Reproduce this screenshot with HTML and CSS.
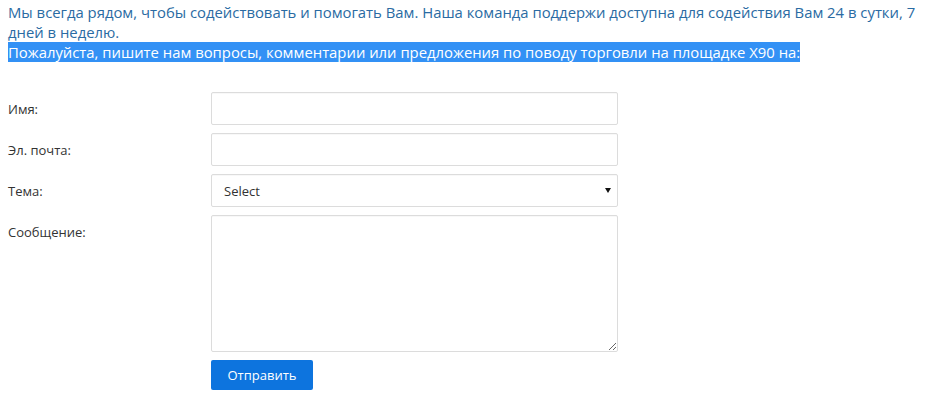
FILE: index.html
```html
<!DOCTYPE html>
<html lang="ru">
<head>
<meta charset="utf-8">
<title>Контакты</title>
<link rel="stylesheet" href="styles.css">
</head>
<body>
<div class="page">
  <p class="intro">Мы всегда рядом, чтобы содействовать и помогать Вам. Наша команда поддержи доступна для содействия Вам 24 в сутки, 7 дней в неделю.<br><span class="hl">Пожалуйста, пишите нам вопросы, комментарии или предложения по поводу торговли на площадке X90 на:</span></p>
  <form class="form">
    <label class="label" for="name">Имя:</label>
    <input class="field" id="name" type="text">
    <label class="label" for="email">Эл. почта:</label>
    <input class="field" id="email" type="text">
    <label class="label" for="topic">Тема:</label>
    <div class="select-wrap">
      <select class="field select" id="topic"><option>Select</option></select>
      <span class="arrow"></span>
    </div>
    <label class="label" for="msg">Сообщение:</label>
    <textarea class="field area" id="msg"></textarea>
    <span></span>
    <div><button class="btn" type="button">Отправить</button></div>
  </form>
</div>
</body>
</html>
```
FILE: styles.css
```css
html, body {
  margin: 0;
  padding: 0;
  background: #fff;
}
.page {
  padding: 2px 8px 0 8px;
  font-family: "Open Sans", "Noto Sans", sans-serif;
}
.intro {
  margin: 0;
  font-size: 14.85px;
  line-height: 20px;
  color: #2a6ba3;
}
.hl {
  background: #3391f5;
  color: #fff;
}
.form {
  margin-top: 30px;
  display: grid;
  grid-template-columns: 203px 407px;
  row-gap: 8px;
}
.label {
  font-size: 13px;
  line-height: 31px;
  padding-top: 2px;
  color: #333;
}
.field {
  box-sizing: border-box;
  width: 407px;
  height: 33px;
  border: 1px solid #dcdcdc;
  border-radius: 2px;
  box-shadow: inset 0 1px 1px rgba(0,0,0,0.03);
  background: #fff;
  font-family: "Open Sans", "Noto Sans", sans-serif;
  font-size: 13px;
  color: #333;
  margin: 0;
  outline: none;
}
.select-wrap {
  position: relative;
  width: 407px;
}
.select {
  appearance: none;
  -webkit-appearance: none;
  padding: 0 12px;
}
.arrow {
  position: absolute;
  right: 7px;
  top: 14px;
  width: 0;
  height: 0;
  border-left: 3px solid transparent;
  border-right: 3px solid transparent;
  border-top: 5px solid #111;
}
.area {
  height: 137px;
  resize: both;
}
.btn {
  box-sizing: border-box;
  width: 102px;
  height: 30px;
  border: none;
  border-radius: 2px;
  background: #0d74de;
  color: #fff;
  font-family: "Open Sans", "Noto Sans", sans-serif;
  font-size: 13px;
  padding: 0;
  cursor: pointer;
}
```
